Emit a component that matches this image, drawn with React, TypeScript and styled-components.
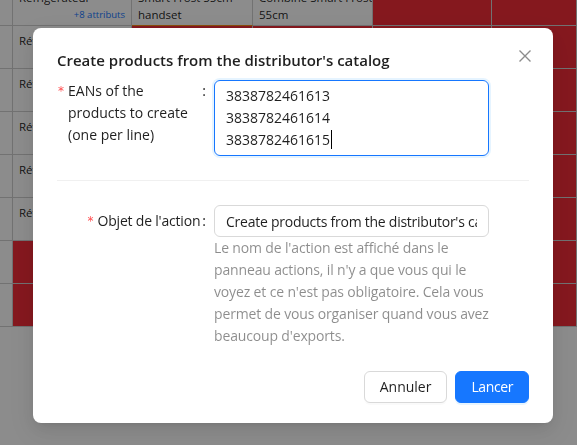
import styled, { createGlobalStyle } from "styled-components";

const GlobalStyle = createGlobalStyle`
  * { box-sizing: border-box; }
  body {
    margin: 0;
    background: #ffffff;
    font-family: "Open Sans", sans-serif;
    color: rgba(0, 0, 0, 0.88);
  }
`;

const Page = styled.div`
  height: 445px;
  overflow: hidden;
`;

/* ---------- grid behind the dialog ---------- */

const Grid = styled.div`
  display: grid;
  grid-template-columns: 13px 119px 121px 120px 119px 1fr;
  grid-auto-rows: 43px;
  margin-top: -17px;
  font-size: 11.5px;
  line-height: 17px;
`;

const Cell = styled.div<{ $alert?: boolean; $selected?: boolean }>`
  background: ${(p) => (p.$alert ? "#f32c38" : "#ffffff")};
  border-right: 1px solid #cfcfcf;
  border-bottom: 1px solid ${(p) => (p.$selected ? "#fa8c16" : "#cfcfcf")};
  padding: 3px 6px 0;
  overflow: hidden;
  display: flex;
  flex-direction: column;
  justify-content: center;
  white-space: nowrap;
`;

const NameCell = styled(Cell)`
  justify-content: flex-start;
  padding-top: 6px;
`;

const AttributesLink = styled.span`
  align-self: flex-end;
  font-size: 9.5px;
  color: #1677ff;
`;

/* ---------- dialog ---------- */

const Mask = styled.div`
  position: fixed;
  inset: 0;
  background: rgba(0, 0, 0, 0.45);
`;

const DialogWrap = styled.div`
  position: fixed;
  inset: 0;
  display: flex;
  align-items: flex-start;
  padding: 28px 0 0 33px;
`;

const Dialog = styled.div`
  position: relative;
  width: 520px;
  padding: 20px 24px;
  background: #ffffff;
  border-radius: 8px;
  box-shadow: 0 6px 16px 0 rgba(0, 0, 0, 0.08),
    0 3px 6px -4px rgba(0, 0, 0, 0.12), 0 9px 28px 8px rgba(0, 0, 0, 0.05);
  font-size: 14px;
  line-height: 22px;
`;

const Title = styled.div`
  margin-bottom: 8px;
  font-size: 15px;
  font-weight: 600;
  line-height: 24px;
  color: rgba(0, 0, 0, 0.88);
`;

const CloseButton = styled.button`
  position: absolute;
  top: 17px;
  right: 17px;
  width: 22px;
  height: 22px;
  padding: 0;
  border: none;
  background: transparent;
  display: flex;
  align-items: center;
  justify-content: center;
  cursor: pointer;
`;

const FormRow = styled.div`
  display: flex;
  align-items: flex-start;
`;

const Colon = styled.span`
  margin: 0 8px 0 2px;
`;

const LabelCol = styled.div<{ $wrap?: boolean }>`
  flex: 0 0 157px;
  display: flex;
  align-items: flex-start;
  justify-content: ${(p) => (p.$wrap ? "flex-start" : "flex-end")};
  padding-left: ${(p) => (p.$wrap ? "1px" : "0")};
  line-height: ${(p) => (p.$wrap ? "22px" : "32px")};

  ${Colon} {
    margin-left: ${(p) => (p.$wrap ? "auto" : "2px")};
  }
`;

const Required = styled.span`
  margin-right: 4px;
  color: #ff4d4f;
  font-family: SimSun, "DejaVu Sans", sans-serif;
  font-size: 12px;
`;

const LabelText = styled.span<{ $wrap?: boolean }>`
  max-width: ${(p) => (p.$wrap ? "120px" : "none")};
  letter-spacing: ${(p) => (p.$wrap ? "0" : "-0.2px")};
`;

const Control = styled.div`
  flex: 0 0 275px;
`;

const TextArea = styled.div`
  height: 76px;
  padding: 4px 11px;
  border: 1px solid #1677ff;
  border-radius: 6px;
  box-shadow: 0 0 0 2px rgba(5, 145, 255, 0.1);
  white-space: pre;
`;

const Caret = styled.span`
  display: inline-block;
  width: 1px;
  height: 19px;
  margin-left: 1px;
  vertical-align: -4px;
  background: #000000;
`;

const Input = styled.input`
  display: block;
  width: 100%;
  height: 32px;
  padding: 4px 11px;
  border: 1px solid #d9d9d9;
  border-radius: 6px;
  font: inherit;
  line-height: 22px;
  letter-spacing: -0.25px;
  color: rgba(0, 0, 0, 0.88);
  outline: none;
`;

const Help = styled.div`
  color: rgba(0, 0, 0, 0.45);
  letter-spacing: -0.15px;
`;

const Divider = styled.div`
  height: 1px;
  margin: 24px 0;
  background: rgba(5, 5, 5, 0.06);
`;

const Footer = styled.div`
  display: flex;
  justify-content: flex-end;
  gap: 8px;
  margin-top: 24px;
`;

const Button = styled.button<{ $primary?: boolean }>`
  height: 32px;
  padding: 4px 15px;
  border-radius: 6px;
  border: 1px solid ${(p) => (p.$primary ? "#1677ff" : "#d9d9d9")};
  background: ${(p) => (p.$primary ? "#1677ff" : "#ffffff")};
  color: ${(p) => (p.$primary ? "#ffffff" : "rgba(0, 0, 0, 0.88)")};
  box-shadow: ${(p) =>
    p.$primary ? "0 2px 0 rgba(5, 145, 255, 0.1)" : "0 2px 0 rgba(0, 0, 0, 0.02)"};
  font-family: inherit;
  font-size: 14px;
  line-height: 22px;
  letter-spacing: ${(p) => (p.$primary ? "-0.4px" : "0")};
  cursor: pointer;
`;

const eans = ["3838782461613", "3838782461614", "3838782461615"];

function ProductRow({ first }: { first?: boolean }) {
  return (
    <>
      <Cell />
      <NameCell>
        <span>Réfrigérateur</span>
        <AttributesLink>+8 attributs</AttributesLink>
      </NameCell>
      {first ? (
        <>
          <Cell $selected>
            <span>Smart Frost 55cm</span>
            <span>handset</span>
          </Cell>
          <Cell>
            <span>Combiné Smart Frost</span>
            <span>55cm</span>
          </Cell>
        </>
      ) : (
        <>
          <Cell $alert />
          <Cell $alert />
        </>
      )}
      <Cell $alert />
      <Cell $alert />
    </>
  );
}

function EmptyRow() {
  return (
    <>
      <Cell />
      <Cell $alert />
      <Cell $alert />
      <Cell $alert />
      <Cell $alert />
      <Cell $alert />
    </>
  );
}

export default function App() {
  return (
    <Page>
      <GlobalStyle />
      <Grid>
        <ProductRow first />
        <ProductRow />
        <ProductRow />
        <ProductRow />
        <ProductRow />
        <ProductRow />
        <EmptyRow />
        <EmptyRow />
      </Grid>

      <Mask />
      <DialogWrap>
        <Dialog role="dialog">
          <CloseButton aria-label="Close">
            <svg width="16" height="16" viewBox="0 0 16 16">
              <path
                d="M2.5 2.5 L13.5 13.5 M13.5 2.5 L2.5 13.5"
                stroke="rgba(0,0,0,0.45)"
                strokeWidth="1.4"
                fill="none"
              />
            </svg>
          </CloseButton>
          <Title>Create products from the distributor's catalog</Title>

          <FormRow>
            <LabelCol $wrap>
              <Required>*</Required>
              <LabelText $wrap>EANs of the products to create (one per line)</LabelText>
              <Colon>:</Colon>
            </LabelCol>
            <Control>
              <TextArea role="textbox" aria-multiline="true">
                {eans.join("\n")}
                <Caret />
              </TextArea>
            </Control>
          </FormRow>

          <Divider />

          <FormRow>
            <LabelCol>
              <Required>*</Required>
              <LabelText>Objet de l'action</LabelText>
              <Colon>:</Colon>
            </LabelCol>
            <Control>
              <Input readOnly value="Create products from the distributor's catalog" />
              <Help>
                Le nom de l'action est affiché dans le panneau actions, il n'y a que vous
                qui le voyez et ce n'est pas obligatoire. Cela vous permet de vous
                organiser quand vous avez beaucoup d'exports.
              </Help>
            </Control>
          </FormRow>

          <Footer>
            <Button>Annuler</Button>
            <Button $primary>Lancer</Button>
          </Footer>
        </Dialog>
      </DialogWrap>
    </Page>
  );
}
